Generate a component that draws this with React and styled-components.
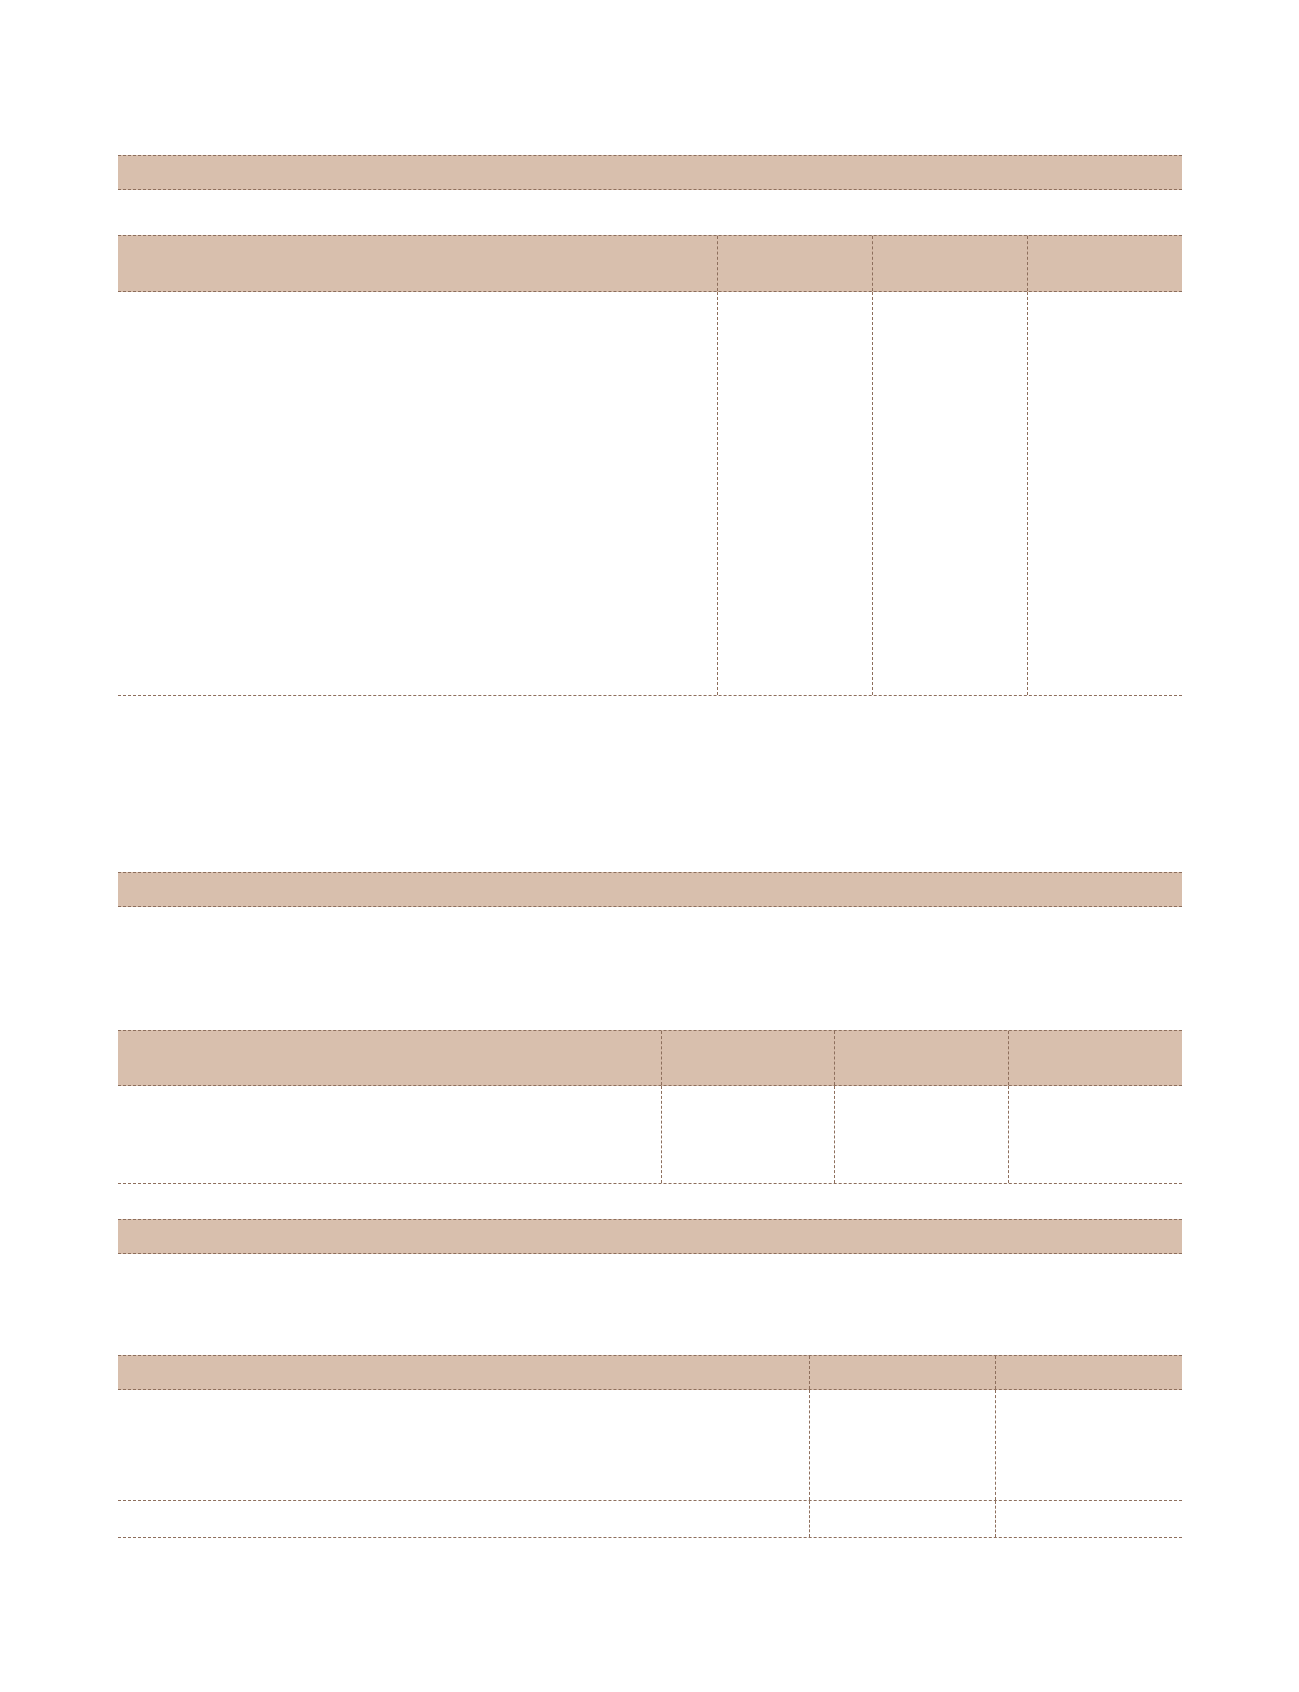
import React from 'react'
import styled, { createGlobalStyle } from 'styled-components'

const GlobalStyle = createGlobalStyle`
  * { box-sizing: border-box; }
  body {
    margin: 0;
    background: #ffffff;
    font-family: 'Liberation Sans', Arial, sans-serif;
  }
`

const line = '1px dashed #8d6e5c'
const tan = '#d8bfad'

const Page = styled.div`
  width: 1064px;
  margin-left: 118px;
  padding-top: 155px;
  padding-bottom: 154px;
  display: flex;
  flex-direction: column;
`

const Band = styled.div`
  height: 35px;
  background: ${tan};
  border-top: ${line};
  border-bottom: ${line};
  margin-bottom: ${p => p.$after}px;
`

const Table = styled.div`
  display: flex;
  flex-direction: column;
  margin-bottom: ${p => p.$after}px;
`

const Row = styled.div`
  display: grid;
  grid-template-columns: ${p => p.$cols};
  height: ${p => p.$h}px;
  border-bottom: ${line};
  ${p => p.$head && `
    background: ${tan};
    border-top: ${line};
  `}
`

const Cell = styled.div`
  & + & {
    border-left: ${line};
  }
`

function Grid({ cols, rows, after }) {
  const count = cols.split(' ').length
  return (
    <Table $after={after}>
      {rows.map((r, i) => (
        <Row key={i} $cols={cols} $h={r.h} $head={r.head}>
          {Array.from({ length: count }).map((_, j) => (
            <Cell key={j} />
          ))}
        </Row>
      ))}
    </Table>
  )
}

export default function App() {
  return (
    <>
      <GlobalStyle />
      <Page>
        <Band $after={45} />
        <Grid
          after={176}
          cols="599px 155px 155px 155px"
          rows={[{ h: 57, head: true }, { h: 404 }]}
        />
        <Band $after={123} />
        <Grid
          after={35}
          cols="543px 173px 174px 174px"
          rows={[{ h: 56, head: true }, { h: 98 }]}
        />
        <Band $after={101} />
        <Grid
          after={0}
          cols="691px 186px 187px"
          rows={[{ h: 35, head: true }, { h: 111 }, { h: 37 }]}
        />
      </Page>
    </>
  )
}
